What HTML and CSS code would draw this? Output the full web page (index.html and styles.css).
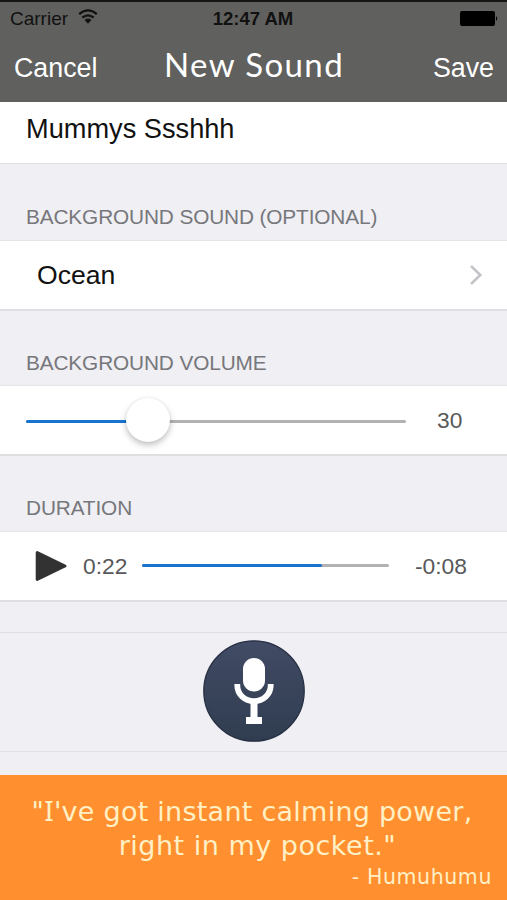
FILE: index.html
```html
<!DOCTYPE html>
<html lang="en">
<head>
<meta charset="utf-8">
<title>New Sound</title>
<link rel="stylesheet" href="styles.css">
</head>
<body>
<header class="top">
  <div class="status">
    <div class="carrier"><span class="carrier-name">Carrier</span>
      <svg class="wifi" width="20" height="16" viewBox="0 0 20 16"><path d="M1.2 5.1Q10-2.4 18.8 5.1M4.3 8.7Q10 4 15.7 8.7" fill="none" stroke="#111" stroke-width="2.3"/><path d="M6.6 11Q10 8.2 13.4 11L10 14.8Z" fill="#111"/></svg>
    </div>
    <span class="clock">12:47 AM</span>
    <svg class="battery" width="39" height="15" viewBox="0 0 39 15"><rect width="35" height="15" rx="2"/><path d="M36 5q2.6 2.5 0 5z"/></svg>
  </div>
  <nav class="nav">
    <span class="cancel">Cancel</span>
    <h1 class="title">New Sound</h1>
    <span class="save">Save</span>
  </nav>
</header>
<main>
  <div class="row name-row"><span class="name">Mummys Ssshhh</span></div>
  <h2 class="label sound-label">BACKGROUND SOUND (OPTIONAL)</h2>
  <div class="row sound-row"><span class="sound">Ocean</span>
    <svg class="chevron" width="14" height="22" viewBox="0 0 14 22"><path d="M2 2L11.3 11L2 20" fill="none" stroke="#c4c4c8" stroke-width="2.6"/></svg>
  </div>
  <h2 class="label volume-label">BACKGROUND VOLUME</h2>
  <div class="row volume-row">
    <div class="track slider"><div class="fill volume-fill"></div><div class="knob"></div></div>
    <span class="value">30</span>
  </div>
  <h2 class="label duration-label">DURATION</h2>
  <div class="row play-row">
    <svg class="play" width="34" height="34" viewBox="0 0 34 34"><path d="M3.2 3.6L31 17L3.2 30.4Z" fill="#323232" stroke="#323232" stroke-width="3" stroke-linejoin="round"/></svg>
    <span class="value elapsed">0:22</span>
    <div class="track progress"><div class="fill progress-fill"></div></div>
    <span class="value remaining">-0:08</span>
  </div>
  <div class="gap"></div>
  <div class="record">
    <svg width="104" height="104" viewBox="0 0 104 104">
      <defs><linearGradient id="disc" x1="0" y1="0" x2="0" y2="1"><stop offset="0" stop-color="#414b65"/><stop offset="1" stop-color="#303d50"/></linearGradient></defs>
      <circle cx="52" cy="52" r="50.2" fill="url(#disc)" stroke="#272f43" stroke-width="1.3"/>
      <rect x="41" y="19" width="22" height="33.5" rx="11" fill="#fff"/>
      <path d="M35.3 45v1.5a16.7 15.7 0 0 0 33.4 0V45" fill="none" stroke="#fff" stroke-width="5.8"/>
      <path d="M48.5 60h7v18h4.5v7H44v-7h4.5z" fill="#fff"/>
    </svg>
  </div>
</main>
<footer class="quote">
  <p class="line first">"<span class="slab">I</span>'ve got instant calming power,</p>
  <p class="line second">right in my pocket."</p>
  <p class="author">- Humuhumu</p>
</footer>
</body>
</html>
```
FILE: styles.css
```css
* { box-sizing: border-box; }
body { margin: 0; width: 507px; height: 900px; overflow: hidden; background: #efeff4; font-family: "Liberation Sans", Arial, sans-serif; color: #111; display: flex; flex-direction: column; white-space: nowrap; }
h1, h2, p { margin: 0; font-weight: 400; }
.top { height: 102px; background: #60605e; border-top: 2px solid #151515; flex: none; }
.status { height: 33px; display: grid; grid-template-columns: 1fr auto 1fr; align-items: center; padding: 0 8px 0 10px; }
.carrier { display: flex; align-items: center; gap: 8px; }
.carrier-name { font-size: 19px; }
.wifi { margin: -3px 0 0 2px; }
.clock { font-size: 18.5px; font-weight: 700; margin-left: -3px; }
.battery { justify-self: end; fill: #000; }
.nav { height: 67px; display: grid; grid-template-columns: 1fr auto 1fr; align-items: center; color: #fff; padding: 0 13px 0 14px; font-size: 26.8px; }
.title { font: 400 33px/40px Lato, sans-serif; letter-spacing: 1.4px; margin-top: -9px; }
.save { justify-self: end; }
.row { background: #fff; display: flex; align-items: center; flex: none; border-bottom: 2px solid #dfdfe2; }
.name-row { height: 62px; padding: 0 0 7px 26px; font-size: 27.2px; border-bottom-width: 1px; }
.label { color: #77777b; font-size: 20.8px; letter-spacing: -.13px; line-height: 24px; padding: 41px 0 11px 26px; height: 77px; border-bottom: 1px solid #e5e5e8; }
.sound-row { height: 70px; padding: 0 24px 0 37px; font-size: 26.6px; justify-content: space-between; }
.volume-label, .duration-label { height: 75px; padding-top: 40px; }
.volume-row { height: 70px; padding-left: 26px; }
.track { height: 3px; border-radius: 2px; background: #b2b2b2; flex: none; }
.slider { width: 380px; display: flex; align-items: center; margin-top: 2px; }
.fill { height: 3px; background: #1874d1; border-radius: 2px; }
.volume-fill { width: 101px; }
.knob { width: 44px; height: 44px; margin: -2px 0 0 -1px; border-radius: 50%; background: #fff; box-shadow: 0 3px 6px rgba(0,0,0,.25), 0 0 2px rgba(0,0,0,.08); flex: none; }
.value { color: #58585a; font-size: 22.8px; }
.slider + .value { margin-left: 31px; }
.duration-label { height: 76px; }
.play-row { height: 70px; padding-left: 34px; }
.elapsed { width: 58px; padding-left: 15px; margin-right: 16px; }
.progress { width: 247px; margin-top: -1px; }
.progress-fill { width: 180px; }
.remaining { margin-left: 26px; }
.gap { height: 31px; border-bottom: 1px solid #dfdfe3; }
.record { height: 119px; padding-bottom: 2px; display: flex; justify-content: center; align-items: center; border-bottom: 1px solid #e3e3e7; }
.quote { margin-top: auto; height: 125px; flex: none; background: #ff8f2f; color: #fff0c5; font-family: "DejaVu Sans", Verdana, sans-serif; padding-top: 20px; }
.line { font-size: 27px; line-height: 34px; text-align: center; }
.first { letter-spacing: .25px; padding-right: 3px; }
.second { letter-spacing: .5px; padding-left: 8px; }
.slab { font-family: "Noto Sans", sans-serif; font-size: 28px; line-height: 1; }
.author { font-size: 20.5px; line-height: 28px; letter-spacing: .6px; text-align: right; padding-right: 15px; }
```
